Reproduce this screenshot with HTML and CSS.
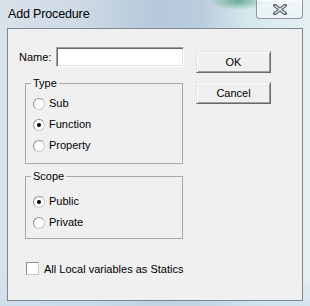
FILE: index.html
```html
<!DOCTYPE html>
<html lang="en">
<head>
    <meta charset="UTF-8">
    <title>Add Procedure</title>
    <link rel="stylesheet" href="styles.css">
</head>
<body>

    <div class="window">
        <div class="titlebar">
            <span class="title">Add Procedure</span>
            <div class="close">
                <svg width="14" height="11" viewBox="0 0 14 11">
                    <path d="M2 1.5 L12 9.5 M12 1.5 L2 9.5" stroke="#5f6870" stroke-width="3.6" stroke-linecap="square" fill="none"/>
                    <path d="M2 1.5 L12 9.5 M12 1.5 L2 9.5" stroke="#e4e8ec" stroke-width="1.4" stroke-linecap="butt" fill="none"/>
                </svg>
            </div>
        </div>

        <div class="client">
            <div class="main">
                <div class="name-row">
                    <label class="name-label">Name:</label>
                    <input class="textbox" type="text">
                </div>

                <fieldset class="group type">
                    <legend>Type</legend>
                    <div class="radio"><span class="circle"></span>Sub</div>
                    <div class="radio"><span class="circle checked"></span>Function</div>
                    <div class="radio"><span class="circle"></span>Property</div>
                </fieldset>

                <fieldset class="group scope">
                    <legend>Scope</legend>
                    <div class="radio"><span class="circle checked"></span>Public</div>
                    <div class="radio"><span class="circle"></span>Private</div>
                </fieldset>

                <div class="check"><span class="box"></span>All Local variables as Statics</div>
            </div>

            <div class="buttons">
                <div class="btn">OK</div>
                <div class="btn">Cancel</div>
            </div>
        </div>
    </div>

</body>
</html>
```

FILE: styles.css
```css
body{
    margin: 0;
    font-family: "Liberation Sans", Arial, sans-serif;
    font-size: 11px;
    color: #000;
}

.window{
    width: 310px;
    height: 306px;
    box-sizing: border-box;
    padding: 0 7px 5px 7px;
    display: flex;
    flex-direction: column;
    background:
        radial-gradient(ellipse 28px 9px at 238px 1px, rgba(70,150,120,0.75), rgba(70,150,120,0)),
        linear-gradient(to bottom, rgba(255,255,255,0) 90%, rgba(200,220,235,0.6) 100%),
        linear-gradient(to right, #d9e1ea 0%, #cfdae5 25%, #b6c8da 50%, #b9cddd 65%, #d6e8ec 80%, #e6f0f3 100%);
}

/* title bar */
.titlebar{
    height: 28px;
    display: flex;
    align-items: flex-start;
}
.title{
    margin: 6px 0 0 1px;
    font-size: 12.5px;
    line-height: 16px;
    letter-spacing: -0.15px;
    color: #000;
}
.close{
    margin-left: auto;
    width: 47px;
    height: 19px;
    box-sizing: border-box;
    border: 1px solid #8a96a2;
    border-top: none;
    border-radius: 0 0 4px 4px;
    background: linear-gradient(to bottom, rgba(255,255,255,0.55), rgba(235,242,246,0.85));
    box-shadow: inset 0 0 0 1px rgba(255,255,255,0.6);
    display: flex;
    align-items: center;
    justify-content: center;
}

/* client area */
.client{
    flex: 1;
    display: flex;
    border: 1px solid #7d8791;
    background-color: #f0f0f0;
}
.main{
    width: 176px;
}

.name-row{
    display: flex;
    align-items: center;
    height: 20px;
    margin: 18px 0 0 11px;
}
.name-label{
    width: 37px;
}
.textbox{
    width: 128px;
    height: 20px;
    box-sizing: border-box;
    margin: 0;
    padding: 0;
    background: #fff;
    border: 1px solid;
    border-color: #a0a0a0 #fff #fff #a0a0a0;
    box-shadow: inset 1px 1px #696969, inset -1px -1px #e3e3e3;
    outline: none;
}

/* group boxes */
.group{
    width: 158px;
    box-sizing: border-box;
    margin: 0 0 0 17px;
    border: 1px solid #a8a8a8;
    padding: 3px 0 7px 7px;
    line-height: 13px;
}
.group legend{
    margin-left: -2px;
    padding: 0 2px;
    line-height: 13px;
}
.type{
    margin-top: 10px;
}
.scope{
    margin-top: 6px;
    padding-top: 8px;
    padding-bottom: 5px;
}

.radio{
    display: flex;
    align-items: center;
    height: 21px;
    gap: 4px;
}
.circle{
    width: 12px;
    height: 12px;
    box-sizing: border-box;
    border-radius: 50%;
    border: 1px solid;
    border-color: #8e8e8e #c9c9c9 #c9c9c9 #8e8e8e;
    background: #fff;
    display: flex;
    align-items: center;
    justify-content: center;
}
.circle.checked::after{
    content: "";
    width: 4px;
    height: 4px;
    border-radius: 50%;
    background: #000;
}

.check{
    display: flex;
    align-items: center;
    height: 13px;
    margin: 23px 0 0 18px;
    gap: 5px;
}
.box{
    width: 13px;
    height: 13px;
    box-sizing: border-box;
    border: 1px solid;
    border-color: #8e8e8e #c9c9c9 #c9c9c9 #8e8e8e;
    background: #fff;
}

/* buttons */
.buttons{
    display: flex;
    flex-direction: column;
    gap: 9px;
    margin: 22px 0 0 12px;
}
.btn{
    width: 75px;
    height: 22px;
    box-sizing: border-box;
    display: flex;
    align-items: center;
    justify-content: center;
    background: #f0f0f0;
    border: 1px solid;
    border-color: #e3e3e3 #696969 #696969 #e3e3e3;
    box-shadow: inset 1px 1px #fff, inset -1px -1px #a0a0a0;
}
```
